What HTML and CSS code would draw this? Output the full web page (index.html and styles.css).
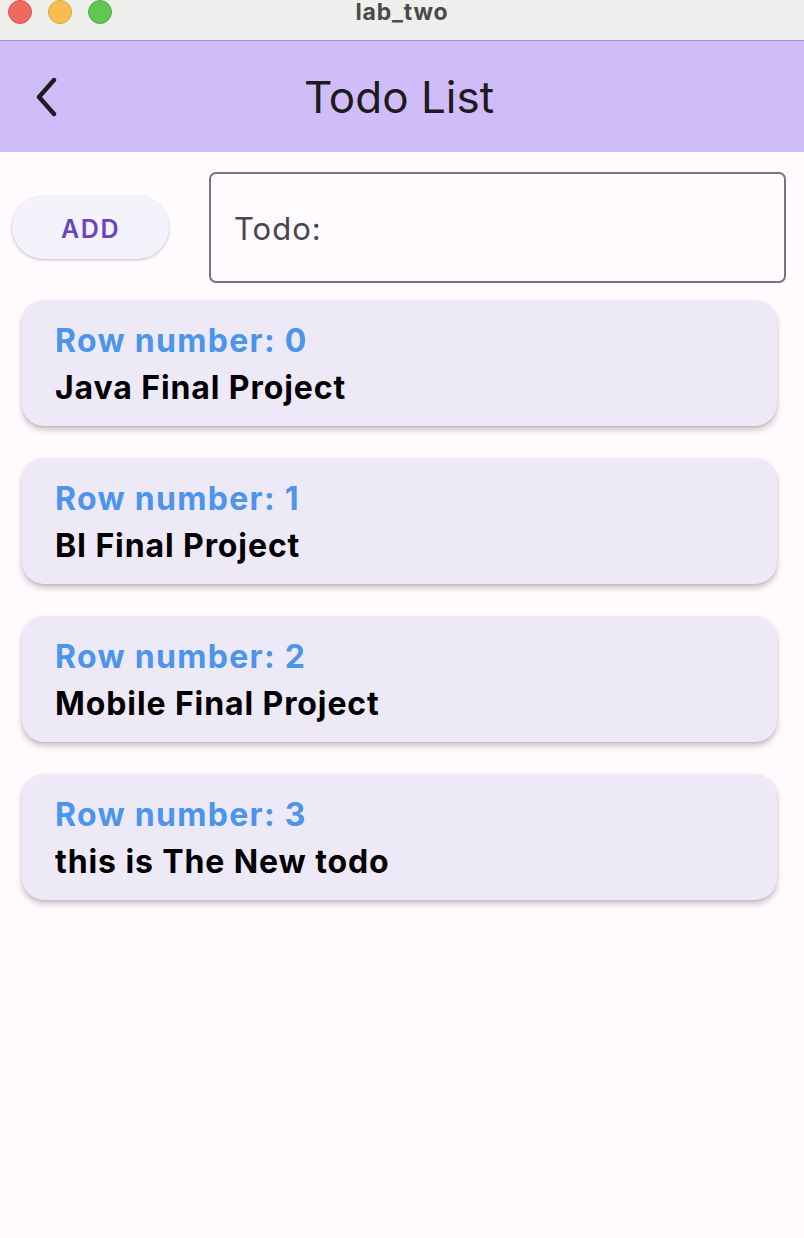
FILE: index.html
```html
<!DOCTYPE html>
<html>
<head>
<meta charset="utf-8">
<link rel="stylesheet" href="styles.css">
</head>
<body>
<div class="window">
  <div class="titlebar">
    <div class="lights">
      <span class="light red"></span>
      <span class="light yellow"></span>
      <span class="light green"></span>
    </div>
    <div class="wintitle">lab_two</div>
  </div>
  <header class="appbar">
    <button class="back" aria-label="Back">
      <svg width="24" height="40" viewBox="0 0 24 40"><path d="M19 3 L4 20 L19 37" fill="none" stroke="#1d1b20" stroke-width="4.4" stroke-linecap="round" stroke-linejoin="round"/></svg>
    </button>
    <h1 class="apptitle">Todo List</h1>
  </header>
  <main class="content">
    <div class="inputrow">
      <button class="addbtn">ADD</button>
      <div class="field"><span class="placeholder">Todo:</span></div>
    </div>
    <ul class="list">
      <li class="card"><div class="rownum">Row number: 0</div><div class="todo">Java Final Project</div></li>
      <li class="card"><div class="rownum">Row number: 1</div><div class="todo">BI Final Project</div></li>
      <li class="card"><div class="rownum">Row number: 2</div><div class="todo">Mobile Final Project</div></li>
      <li class="card"><div class="rownum">Row number: 3</div><div class="todo">this is The New todo</div></li>
    </ul>
  </main>
</div>
</body>
</html>
```
FILE: styles.css
```css
* { box-sizing: border-box; }
html, body { margin: 0; padding: 0; }
body {
  font-family: Inter, "Noto Sans", sans-serif;
  background: #fffbfe;
  width: 804px;
  height: 1238px;
  overflow: hidden;
}
.window { display: flex; flex-direction: column; height: 100%; }
.titlebar {
  height: 41px;
  background: #efefed;
  border-bottom: 1px solid #a394d6;
  display: flex;
  align-items: flex-start;
  position: relative;
}
.lights { display: flex; gap: 16px; padding-left: 8px; }
.light { width: 24px; height: 24px; border-radius: 50%; display: block; }
.red { background: #ee6a5f; border: 1px solid #d6574d; }
.yellow { background: #f5be4f; border: 1px solid #d9a43e; }
.green { background: #62c655; border: 1px solid #4fae43; }
.wintitle {
  position: absolute;
  left: 0; right: 0; top: 0;
  text-align: center;
  font-size: 23px;
  font-weight: 700;
  color: #4b4b4b;
  line-height: 25px;
  letter-spacing: 0.8px;
}
.appbar {
  height: 111px;
  background: #d0bcf9;
  display: flex;
  align-items: center;
  position: relative;
}
.back {
  background: none; border: 0; padding: 0;
  margin-left: 35px;
  margin-top: 1px;
  width: 24px; height: 40px;
  display: flex;
}
.apptitle {
  position: absolute;
  left: 0; right: 0;
  margin: 0;
  text-align: center;
  font-size: 44px;
  font-weight: 400;
  color: #1d1b20;
  letter-spacing: 0;
  line-height: 50px;
  padding-right: 6px;
}
.content { padding: 20px 0 0 0; }
.inputrow { display: flex; align-items: center; padding: 0 18px 0 12px; gap: 40px; }
.addbtn {
  width: 157px; height: 63px;
  border: 0; border-radius: 32px;
  background: #f4f2fa;
  box-shadow: 0 1px 3px rgba(0,0,0,0.25);
  color: #6944c0;
  font-family: Inter, sans-serif;
  font-size: 25px;
  font-weight: 600;
  letter-spacing: 1.6px;
  padding: 2px 0 0 0;
}
.field {
  flex: 1;
  height: 111px;
  border: 2px solid #79747e;
  border-radius: 7px;
  display: flex;
  align-items: center;
  padding-left: 23px;
}
.placeholder { font-size: 31px; color: #49454f; letter-spacing: 1px; padding-top: 2px; }
.list {
  list-style: none;
  margin: 17px 0 0 22px;
  padding: 0;
  width: 755px;
  display: flex;
  flex-direction: column;
  gap: 32px;
}
.card {
  height: 126px;
  background: #eee9f6;
  border-radius: 22px;
  box-shadow: 0 4px 6px rgba(0,0,0,0.22), 0 1px 2px rgba(0,0,0,0.08);
  padding: 20px 0 0 33px;
}
.rownum { font-size: 32px; font-weight: 700; color: #4b95ed; line-height: 42px; letter-spacing: 1.3px; }
.todo { font-size: 32px; font-weight: 700; color: #000; line-height: 52px; letter-spacing: 0.9px; }
```
